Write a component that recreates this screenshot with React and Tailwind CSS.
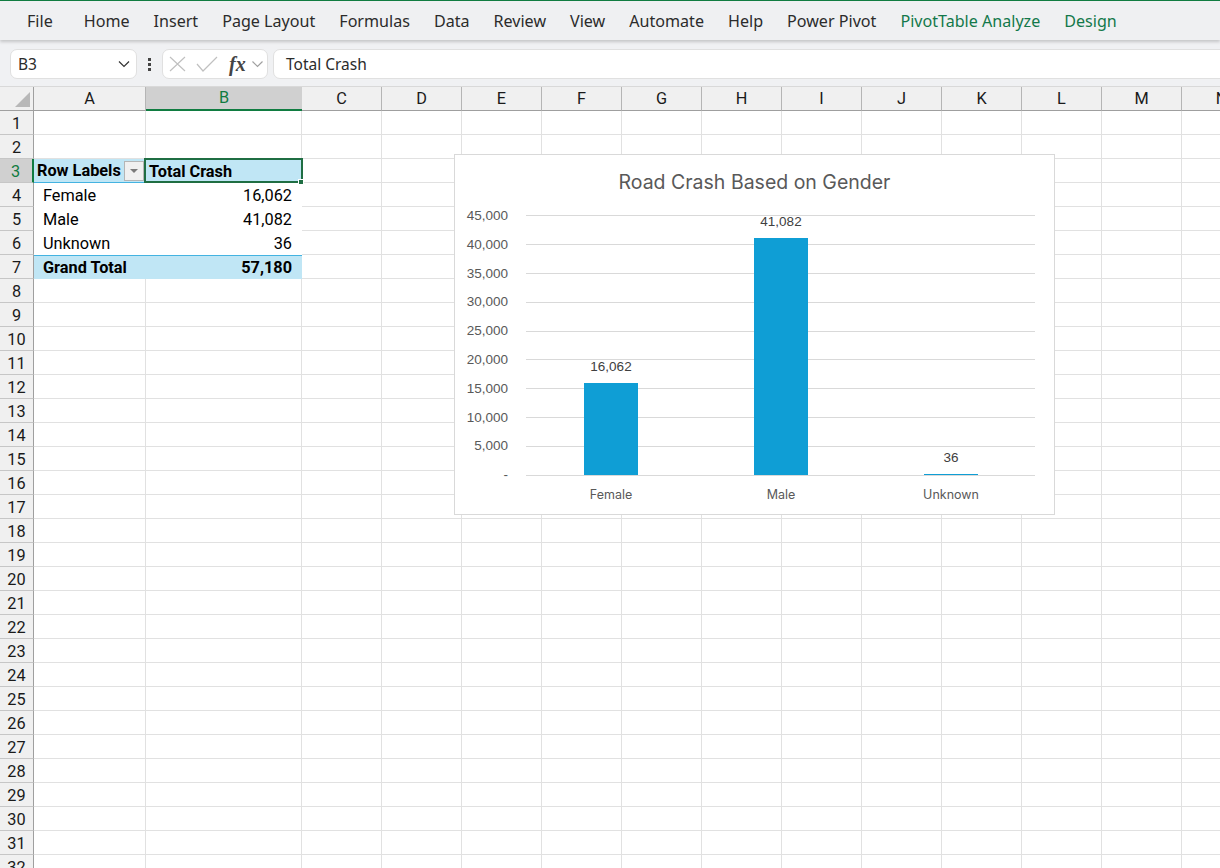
const tabs = [
  { label: "Home" },
  { label: "Insert" },
  { label: "Page Layout" },
  { label: "Formulas" },
  { label: "Data" },
  { label: "Review" },
  { label: "View" },
  { label: "Automate" },
  { label: "Help" },
  { label: "Power Pivot" },
  { label: "PivotTable Analyze", green: true },
  { label: "Design", green: true },
];

const columns = ["A", "B", "C", "D", "E", "F", "G", "H", "I", "J", "K", "L", "M", "N"];
const rows = Array.from({ length: 32 }, (_, i) => i + 1);

const axisLabels = ["45,000", "40,000", "35,000", "30,000", "25,000", "20,000", "15,000", "10,000", "5,000", "-"];

const chartData = [
  { name: "Female", value: "16,062", height: 92 },
  { name: "Male", value: "41,082", height: 237 },
  { name: "Unknown", value: "36", height: 1 },
];

const pivot = {
  4: { a: "Female", b: "16,062" },
  5: { a: "Male", b: "41,082" },
  6: { a: "Unknown", b: "36" },
};

const Chevron = ({ className }) => (
  <svg viewBox="0 0 12 8" className={className} fill="none" stroke="currentColor" strokeWidth="1.2">
    <path d="M1 1.5 L6 6.5 L11 1.5" />
  </svg>
);

const CellA = ({ row }) => {
  if (row === 3) {
    return (
      <div className="h-full bg-[#c0e6f5] border-b border-[#44b3e1] flex items-center pl-[3px] pt-[2px] font-bold text-black relative">
        Row Labels
        <span className="absolute left-[90px] top-[2px] w-[20px] h-[20px] bg-[#f0f0f0] border border-[#b5b5b5] flex items-center justify-center">
          <span className="w-0 h-0 border-l-[4px] border-r-[4px] border-t-[4px] border-l-transparent border-r-transparent border-t-[#7a7a7a]" />
        </span>
      </div>
    );
  }
  if (row === 7) {
    return (
      <div className="h-full bg-[#c0e6f5] border-t border-[#44b3e1] flex items-center pl-[9px] pt-[1px] font-bold text-black">
        Grand Total
      </div>
    );
  }
  if (pivot[row]) {
    return <div className="h-full flex items-center pl-[9px] pt-[2px] text-black">{pivot[row].a}</div>;
  }
  return <div className="h-full border-r border-b border-[#e1e1e1]" />;
};

const CellB = ({ row }) => {
  if (row === 3) {
    return (
      <div className="h-full bg-[#c0e6f5] flex items-center pl-[3px] pt-[2px] font-bold text-black relative">
        Total Crash
        <div className="absolute left-[-2px] right-[-1px] top-[-1px] bottom-[0px] border-2 border-[#1f6e43]" />
        <div className="absolute right-[-2px] bottom-[-2px] z-10 w-[4px] h-[4px] bg-[#1f6e43] border border-white box-content" />
      </div>
    );
  }
  if (row === 7) {
    return (
      <div className="h-full bg-[#c0e6f5] border-t border-[#44b3e1] flex items-center justify-end pr-[10px] pt-[1px] font-bold text-black">
        57,180
      </div>
    );
  }
  if (pivot[row]) {
    return <div className="h-full flex items-center justify-end pr-[10px] pt-[2px] text-black">{pivot[row].b}</div>;
  }
  return <div className="h-full border-r border-b border-[#e1e1e1]" />;
};

const RoadCrashChart = () => (
  <div className="absolute left-[454px] top-[67px] w-[601px] h-[361px] bg-white border border-[#d9d9d9] z-10 flex flex-col font-['Liberation_Sans',sans-serif]">
    <div className="h-[54px] pt-[14px] text-center text-[19.5px] leading-[26px] text-[#595959] font-['Inter',sans-serif]">
      Road Crash Based on Gender
    </div>
    <div className="flex h-[261px] mt-[6px] pl-[12px]">
      <div className="w-[41px] h-[260.3px] flex flex-col justify-between items-end text-[13.5px] leading-[1px] text-[#595959]">
        {axisLabels.map((label) => (
          <span key={label} className="h-[1px]">{label}</span>
        ))}
      </div>
      <div className="relative ml-[18px] w-[509px]">
        <div className="absolute inset-0 flex flex-col justify-between">
          {axisLabels.map((label) => (
            <div key={label} className="h-px bg-[#d9d9d9]" />
          ))}
        </div>
        <div className="absolute inset-0 pb-px grid grid-cols-[170px_170px_170px] items-end">
          {chartData.map((d) => (
            <div key={d.name} className="flex flex-col items-center">
              <span className="text-[13.5px] leading-[14px] mb-[9px] text-[#404040]">{d.value}</span>
              <div className="w-[54px] bg-[#0f9ed5]" style={{ height: d.height }} />
            </div>
          ))}
        </div>
      </div>
    </div>
    <div className="grid grid-cols-[170px_170px_170px] pl-[71px] mt-[11px]">
      {chartData.map((d) => (
        <div key={d.name} className="text-center text-[12.5px] leading-[16px] text-[#595959] font-['Inter',sans-serif]">
          {d.name}
        </div>
      ))}
    </div>
  </div>
);

export default function App() {
  return (
    <div className="w-[1220px] h-[868px] overflow-hidden bg-white flex flex-col font-['Noto_Sans',sans-serif]">
      {/* tabs */}
      <div className="h-[40px] shrink-0 border-t border-[#107c41] bg-[#eff0f2] flex items-center pl-[27px] pt-px gap-[24px] text-[16.1px] text-[#2b2b2b] shadow-[0_2px_3px_rgba(0,0,0,0.18)] relative z-20">
        <span className="mr-[7px]">File</span>
        {tabs.map((t) => (
          <span key={t.label} className={t.green ? "text-[#13784a]" : ""}>{t.label}</span>
        ))}
      </div>

      {/* formula bar */}
      <div className="h-[47px] shrink-0 bg-[#f0f1f3] flex items-start pt-[9px] pl-[10px] border-b border-[#d9d9d9] text-[15.5px] text-[#2b2b2b] overflow-hidden">
        <div className="w-[127px] h-[30px] shrink-0 bg-white border border-[#e0e0e0] rounded-[7px] flex items-center justify-between pl-[7px] pr-[6px]">
          <span className="pt-px">B3</span>
          <Chevron className="w-[12px] h-[8px] text-[#333]" />
        </div>
        <div className="w-[25px] h-[30px] shrink-0 flex flex-col items-center justify-center gap-[2px]">
          <span className="w-[3px] h-[3px] bg-[#444]" />
          <span className="w-[3px] h-[3px] bg-[#444]" />
          <span className="w-[3px] h-[3px] bg-[#444]" />
        </div>
        <div className="w-[106px] h-[30px] shrink-0 bg-white border border-[#e0e0e0] rounded-[7px] flex items-center pl-[6px]">
          <svg viewBox="0 0 17 16" className="w-[17px] h-[16px] text-[#c0c0c0]" fill="none" stroke="currentColor" strokeWidth="1.2">
            <path d="M1 1 L16 15 M16 1 L1 15" />
          </svg>
          <svg viewBox="0 0 22 16" className="w-[22px] h-[16px] ml-[10px] text-[#c0c0c0]" fill="none" stroke="currentColor" strokeWidth="1.2">
            <path d="M1 8 L7 15 L21 1" />
          </svg>
          <span className="ml-[11px] font-['Liberation_Serif',serif] italic font-bold text-[20px] leading-none text-[#444]">fx</span>
          <Chevron className="w-[13px] h-[8px] ml-[5px] text-[#a0a0a0]" />
        </div>
        <div className="w-[960px] h-[30px] shrink-0 ml-[5px] bg-white border border-[#e0e0e0] rounded-l-[7px] flex items-center pl-[12px] pt-px">
          Total Crash
        </div>
      </div>

      {/* sheet */}
      <div className="relative flex-1 overflow-hidden font-['Roboto',sans-serif] text-[16.3px]">
        <div className="grid grid-cols-[34px_112px_156px_repeat(11,80px)_80px] grid-rows-[24px_repeat(32,24px)]">
          <div className="bg-[#f0f0f0] border-r border-b border-[#9f9f9f] relative">
            <svg viewBox="0 0 16 15" className="absolute left-[15px] top-[5px] w-[16px] h-[15px] text-[#b8b8b8]" fill="currentColor">
              <path d="M15 0 L15 15 L0 15 Z" />
            </svg>
          </div>
          {columns.map((c) => (
            <div
              key={c}
              className={
                c === "B"
                  ? "bg-[#d0d0d0] border-b-2 border-[#107c41] text-[#107c41] flex items-center justify-center pt-[1px]"
                  : "bg-[#f0f0f0] border-r border-b border-r-[#b5b5b5] border-b-[#9f9f9f] text-[#1a1a1a] flex items-center justify-center pt-[1px]"
              }
            >
              {c}
            </div>
          ))}
          {rows.map((row) => (
            <div key={row} className="contents">
              <div
                className={
                  row === 3
                    ? "bg-[#d0d0d0] border-r-2 border-b border-r-[#107c41] border-b-[#c6c6c6] text-[#107c41] flex items-center justify-center pt-[3px] pr-[1px]"
                    : "bg-[#f0f0f0] border-r border-b border-r-[#9f9f9f] border-b-[#c6c6c6] text-[#1a1a1a] flex items-center justify-center pt-[3px]"
                }
              >
                {row}
              </div>
              <CellA row={row} />
              <CellB row={row} />
              {columns.slice(2).map((c) => (
                <div key={c} className="border-r border-b border-[#e1e1e1]" />
              ))}
            </div>
          ))}
        </div>
        <RoadCrashChart />
      </div>
    </div>
  );
}
